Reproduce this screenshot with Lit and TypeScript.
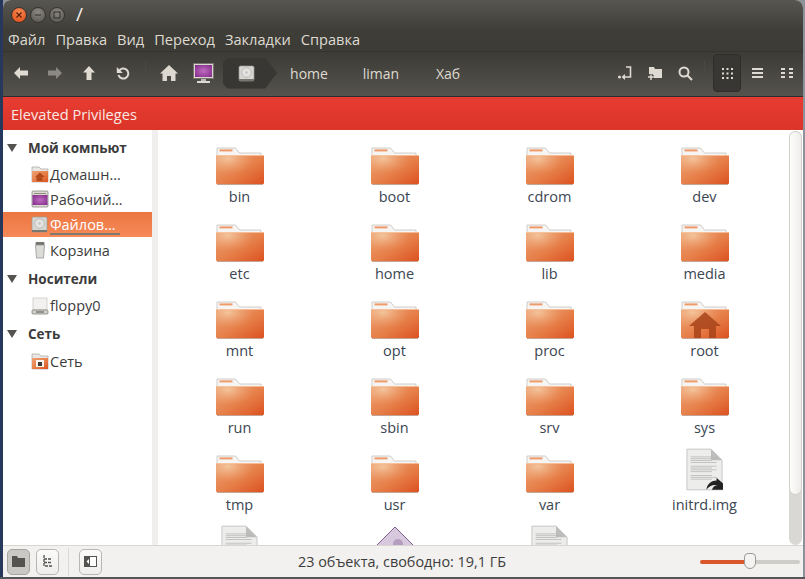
import { LitElement, html, css, svg } from 'lit';
import { customElement } from 'lit/decorators.js';

const MENU = ['Файл', 'Правка', 'Вид', 'Переход', 'Закладки', 'Справка'];

type Item = { name: string; kind?: 'home' | 'file' | 'iso' | 'none' };

const ITEMS: Item[] = [
  { name: 'bin' }, { name: 'boot' }, { name: 'cdrom' }, { name: 'dev' },
  { name: 'etc' }, { name: 'home' }, { name: 'lib' }, { name: 'media' },
  { name: 'mnt' }, { name: 'opt' }, { name: 'proc' }, { name: 'root', kind: 'home' },
  { name: 'run' }, { name: 'sbin' }, { name: 'srv' }, { name: 'sys' },
  { name: 'tmp' }, { name: 'usr' }, { name: 'var' }, { name: 'initrd.img', kind: 'file' },
  { name: '', kind: 'none' }, { name: '', kind: 'iso' }, { name: '', kind: 'none' },
];

const folderBase = svg`
  <path d="M1 1h18.500l4 5H45v12H1z" fill="#f6f5f3" stroke="#c4c2be" stroke-width=".8"/>
  <rect x="3.500" y="2.400" width="13" height="2" fill="#ee9a68"/>
  <rect x="0" y="8" width="48" height="29" rx="1" fill="url(#fb)"/>
  <rect x="0" y="8" width="48" height="29" rx="1" fill="url(#fg)"/>
  <rect x="0" y="8" width="48" height="1" fill="#f7c7a2" opacity=".8"/>
  <rect x="1" y="37" width="46" height="1" fill="#8d4a2a" opacity=".5"/>
`;

function folder(kind?: string) {
  return html`<svg class="folder" width="48" height="40" viewBox="0 0 48 40">
    ${folderBase}
    ${kind === 'home'
      ? svg`<path d="M24 11 8 25h5v12h7v-9h8v9h7V25h5z" fill="#a8431a" opacity=".85"/>`
      : ''}
  </svg>`;
}

function page(arrow = false) {
  const lines = [9, 11, 13, 15, 19, 21, 23, 25, 29, 31, 33];
  return html`<svg class="page" width="37" height="45" viewBox="0 0 40 46">
    <path d="M1 1h26l12 12v32H1z" fill="#ededec" stroke="#c2c2c0"/>
    <path d="M27 1v12h12z" fill="#bdbdbb"/>
    ${lines.map((y) => svg`<rect x="5" y=${y} width="${y % 4 === 1 ? 23 : 28}" height=".8" fill="#b4b4b2"/>`)}
    ${arrow
      ? svg`<path d="M22 45c1-7 6-10 11-10v-3l7 6v7H28c1-3 3-5 6-5-5-1-9 1-12 5z" fill="#222"/>`
      : ''}
  </svg>`;
}

function iso() {
  return html`<svg width="48" height="46" viewBox="0 0 48 46">
    <path d="M24 1 47 24 24 47 1 24z" fill="#d8c8dd" stroke="#7d5e8c"/>
    <circle cx="27" cy="18" r="5" fill="#b49dbe"/>
  </svg>`;
}

const driveIcon = svg`
  <rect x="1" y="1" width="15" height="15" rx="1.500" fill="#d6d6d3" stroke="#9a9a97" stroke-width=".7"/>
  <circle cx="8.500" cy="7.500" r="4.800" fill="#e4e3e1" stroke="#a9a9a6" stroke-width=".7"/>
  <circle cx="8.500" cy="7.500" r="1.300" fill="#c2c2bf"/>
  <rect x="1" y="14" width="15" height="2" fill="#77776f"/>
`;

const sideIcons: Record<string, unknown> = {
  home: svg`<path d="M1 2h7l2 2h7v13H1z" fill="#e9e7e3" stroke="#a9a5a0" stroke-width=".7"/>
    <rect x="1" y="6" width="16" height="11" fill="url(#fb)"/>
    <path d="M9 7.500 4 12h1.500v4h6v-4H14z" fill="#b34a1c"/>`,
  desktop: svg`<rect x="1" y="1" width="16" height="16" rx="1" fill="#dedcd2" stroke="#7b7a72" stroke-width=".7"/>
    <rect x="1.500" y="5" width="15" height="10" fill="url(#screen)"/>
    <rect x="3" y="3" width="12" height="1" fill="#8f8d7a"/>`,
  drive: driveIcon,
  trash: svg`<rect x="4.500" y="1" width="9" height="3" rx="1" fill="#77776f"/>
    <path d="M4.500 4h9l-1 13h-7z" fill="#dcdcd9" stroke="#8a8a87" stroke-width=".7"/>`,
  floppy: svg`<path d="M2 1h14v12H2z" fill="#f2f1ef" stroke="#c4c3bf" stroke-width=".7"/>
    <rect x="1" y="13" width="16" height="4" rx="1" fill="#d2d1cd" stroke="#77766f" stroke-width=".7"/>
    <rect x="5" y="14.500" width="8" height="1" fill="#55544f"/>`,
  network: svg`<path d="M1 2h7l2 2h7v13H1z" fill="#e9e7e3" stroke="#a9a5a0" stroke-width=".7"/>
    <rect x="1" y="6" width="16" height="11" fill="url(#fb)"/>
    <rect x="5" y="8" width="8" height="7" fill="#f7f5f2"/>
    <rect x="7" y="10" width="4" height="4" fill="#3f3a36"/>`,
};

const PLACES = [
  { title: 'Мой компьют', rows: [
    { icon: 'home', label: 'Домашн…' },
    { icon: 'desktop', label: 'Рабочий…' },
    { icon: 'drive', label: 'Файлов…', selected: true },
    { icon: 'trash', label: 'Корзина' },
  ] },
  { title: 'Носители', rows: [{ icon: 'floppy', label: 'floppy0' }] },
  { title: 'Сеть', rows: [{ icon: 'network', label: 'Сеть' }] },
];

@customElement('app-root')
export class AppRoot extends LitElement {
  static styles = css`
    :host {
      display: block;
      width: 805px;
      height: 579px;
      overflow: hidden;
      background:
        linear-gradient(#55565a, #55565a) bottom / 100% 2px no-repeat,
        linear-gradient(90deg, #26385c 0 3px, #8d929a 3px);
      font-family: 'Open Sans', 'Noto Sans', sans-serif;
      font-size: 14px;
      color: #3c3c3c;
    }
    .defs { display: block; width: 0; height: 0; }
    .window {
      margin-left: 3px;
      width: 800px;
      height: 577px;
      display: flex;
      flex-direction: column;
      border-radius: 8px 8px 0 0;
      overflow: hidden;
      background: #f2f1ef;
    }

    /* title and menu */
    .head {
      height: 52px;
      flex: none;
      box-sizing: border-box;
      border-bottom: 1px solid #35342f;
      background: linear-gradient(#575650, #3e3d38 60%, #3c3b36);
    }
    .title {
      height: 29px;
      display: flex;
      align-items: center;
      padding-left: 8px;
      color: #f3f1ec;
    }
    .wbtn {
      width: 16px;
      height: 16px;
      box-sizing: border-box;
      border-radius: 50%;
      margin-right: 3px;
      display: flex;
      align-items: center;
      justify-content: center;
      background: radial-gradient(circle at 50% 30%, #8a8880, #55534d);
      border: 1px solid #35342f;
    }
    .wbtn.close { background: radial-gradient(circle at 50% 30%, #f58a52, #dd4814); }
    .slash { margin-left: 8px; font-size: 19px; line-height: 1; }
    .menu {
      display: flex;
      gap: 10px;
      padding-left: 5px;
      color: #dfdbd2;
      font-size: 14.6px;
      line-height: 20px;
    }

    /* toolbar */
    .toolbar {
      height: 42px;
      flex: none;
      display: flex;
      align-items: center;
      background: linear-gradient(#3c3b36, #55534c);
      border-bottom: 1px solid #2f2e2a;
      color: #dfdbd2;
      padding: 0 0 2px 1px;
    }
    .tool {
      width: 34px;
      height: 38px;
      flex: none;
      display: flex;
      align-items: center;
      justify-content: center;
    }
    .tool svg { display: block; }
    .tool.narrow { width: 30px; }
    .sep {
      width: 1px;
      height: 24px;
      flex: none;
      background: #4a4943;
      margin: 0 6px 0 5px;
    }
    .sep.right { margin: 0 8px 0 4px; }
    .crumb {
      width: 54px;
      height: 31px;
      flex: none;
      margin-left: 3px;
      display: flex;
      align-items: center;
      justify-content: center;
      padding-right: 8px;
      box-sizing: border-box;
      background: #383733;
      clip-path: polygon(8% 0, 78% 0, 100% 50%, 78% 100%, 8% 100%, 0 85%, 0 15%);
    }
    .path { flex: none; text-align: center; font-size: 14px; }
    .path.home { width: 64px; }
    .path.liman { width: 80px; }
    .path.hub { width: 54px; }
    .spacer { flex: 1; }
    .active-view {
      background: #383733;
      border: 1px solid #2f2e2a;
      border-radius: 4px;
      box-sizing: border-box;
      width: 28px;
      margin-right: 1px;
    }
    .view { width: 30px; }
    .toolbar-end { width: 1px; flex: none; }

    .banner {
      height: 33px;
      flex: none;
      box-sizing: border-box;
      display: flex;
      align-items: center;
      padding: 1px 0 0 8px;
      background: linear-gradient(#e73c31, #db3428);
      color: #f7e8e4;
      font-size: 14.6px;
    }

    /* main area */
    .main { flex: 1; min-height: 0; display: flex; background: #fff; }
    .side {
      width: 155px;
      flex: none;
      padding-top: 3.5px;
      box-sizing: border-box;
      background: #fff;
      border-right: 6px solid #f0efed;
    }
    .group {
      height: 28px;
      display: flex;
      align-items: center;
      padding-left: 4px;
      font-weight: 700;
      font-size: 13.5px;
      color: #3c3c3c;
    }
    .tri {
      width: 0;
      height: 0;
      border: 5.5px solid transparent;
      border-top: 8px solid #55534f;
      border-bottom: 0;
      margin-right: 11px;
    }
    .row {
      height: 25.3px;
      display: flex;
      align-items: center;
      padding-left: 28px;
      gap: 1px;
      font-size: 14.5px;
      position: relative;
    }
    .row.sel {
      background: linear-gradient(#ec7642, #f68a58);
      color: #fff;
    }
    .row.sel::after {
      content: '';
      position: absolute;
      left: 47px;
      width: 70px;
      bottom: 2px;
      height: 2px;
      background: #7f7873;
    }
    .places { padding-bottom: 2.2px; }

    .content {
      flex: 1;
      min-width: 0;
      overflow: hidden;
      display: flex;
    }
    .grid {
      flex: 1;
      display: grid;
      grid-template-columns: repeat(4, 155px);
      grid-auto-rows: 77px;
      padding: 16px 0 0 4px;
      align-content: start;
    }
    .cell {
      display: flex;
      flex-direction: column;
      align-items: center;
      font-size: 14.5px;
      line-height: 20px;
    }
    .icon { height: 41px; display: flex; align-items: flex-end; }
    .icon svg { display: block; }
    .icon svg.page { margin-bottom: 3px; }
    .cell span { color: #3b4652; }
    .scroll {
      width: 13px;
      flex: none;
      background: #d9d8d5;
      border-radius: 7px;
      margin: 1px 1px 0 -1px;
      display: flex;
    }
    .thumb {
      flex: none;
      width: 100%;
      height: 364px;
      box-sizing: border-box;
      background: linear-gradient(90deg, #fdfdfc, #eeedeb);
      border: 1px solid #d2d0cc;
      border-radius: 7px;
    }

    /* status bar */
    .status {
      height: 32px;
      flex: none;
      display: flex;
      align-items: center;
      box-sizing: border-box;
      border-top: 1px solid #d8d6d2;
      background: #f2f1ef;
      padding-left: 4px;
    }
    .sbtn {
      width: 23px;
      height: 26px;
      flex: none;
      box-sizing: border-box;
      border: 1px solid #b8b6b2;
      border-radius: 5px;
      background: linear-gradient(#fbfbfa, #eeedeb);
      margin-right: 6px;
      display: flex;
      align-items: center;
      justify-content: center;
    }
    .sbtn.on { background: #c9c8c5; border-color: #a7a5a1; }
    .ssep { width: 1px; height: 28px; flex: none; background: #dcdad6; margin: 0 10px 0 3px; }
    .stext {
      width: 500px;
      flex: none;
      margin-left: 44px;
      text-align: center;
      font-size: 14.4px;
      color: #3c3c3c;
    }
    .slider {
      margin-left: 48px;
      width: 100px;
      height: 4px;
      flex: none;
      border-radius: 2px;
      background: linear-gradient(90deg, #d9572a 50%, #cfcdc9 50%);
      position: relative;
    }
    .knob {
      position: absolute;
      left: 44px;
      top: -7px;
      width: 12px;
      height: 16px;
      box-sizing: border-box;
      background: #f4f3f1;
      border: 1px solid #9b9995;
      border-radius: 4px 4px 6px 6px;
    }
  `;

  render() {
    return html`
      <svg class="defs">
        <defs>
          <linearGradient id="fb" x1="0" y1="0" x2="1" y2="1">
            <stop offset="0" stop-color="#eda273"/>
            <stop offset=".55" stop-color="#e67e48"/>
            <stop offset="1" stop-color="#dc5220"/>
          </linearGradient>
          <radialGradient id="fg" cx=".25" cy=".12" r=".55">
            <stop offset="0" stop-color="#f6d3ae" stop-opacity=".75"/>
            <stop offset="1" stop-color="#f0a878" stop-opacity="0"/>
          </radialGradient>
          <radialGradient id="screen" cx=".5" cy=".5" r=".7">
            <stop offset="0" stop-color="#c06cc0"/>
            <stop offset="1" stop-color="#7f2a88"/>
          </radialGradient>
        </defs>
      </svg>
      <div class="window">
        <div class="head">
          <div class="title">
            <span class="wbtn close">
              <svg width="8" height="8" viewBox="0 0 8 8"><path d="M1.500 1.500l5 5m0-5l-5 5" stroke="#5a1c08" stroke-width="1.200"/></svg>
            </span>
            <span class="wbtn">
              <svg width="8" height="8" viewBox="0 0 8 8"><path d="M1 4h6" stroke="#2f2e2a" stroke-width="1.200"/></svg>
            </span>
            <span class="wbtn">
              <svg width="8" height="8" viewBox="0 0 8 8"><rect x="1" y="1" width="6" height="6" fill="none" stroke="#2f2e2a"/></svg>
            </span>
            <span class="slash">/</span>
          </div>
          <div class="menu">${MENU.map((m) => html`<span>${m}</span>`)}</div>
        </div>

        <div class="toolbar">
          <span class="tool"><svg width="14" height="12" viewBox="0 0 14 12"><path d="M0 6l6-6v3.500h8v5H6V12z" fill="#dfdbd2"/></svg></span>
          <span class="tool"><svg width="14" height="12" viewBox="0 0 14 12"><path d="M14 6L8 0v3.500H0v5h8V12z" fill="#8b8981"/></svg></span>
          <span class="tool"><svg width="12" height="14" viewBox="0 0 12 14"><path d="M6 0l6 6.500H8.500V14h-5V6.500H0z" fill="#dfdbd2"/></svg></span>
          <span class="tool"><svg width="14" height="14" viewBox="0 0 14 14"><path d="M3 5a5 5 0 1 1-.5 4" fill="none" stroke="#dfdbd2" stroke-width="2"/><path d="M.8 1v6h6z" fill="#dfdbd2"/></svg></span>
          <span class="sep"></span>
          <span class="tool"><svg width="18" height="16" viewBox="0 0 18 16"><path d="M9 0 0 8.500h2.500V16h4.500v-5h4v5h4.500V8.500H18z" fill="#dcd8cf"/></svg></span>
          <span class="tool"><svg width="21" height="21" viewBox="0 0 21 21"><rect x=".5" y=".5" width="20" height="15" fill="#d9d7d0" stroke="#77756e"/><rect x="2" y="2" width="17" height="12" fill="url(#screen)"/><rect x="8" y="16" width="5" height="2" fill="#bdbbb4"/><rect x="4" y="18" width="13" height="2" fill="#dcdad3"/></svg></span>
          <span class="crumb"><svg width="17" height="17" viewBox="0 0 17 17">${driveIcon}</svg></span>
          <span class="path home">home</span>
          <span class="path liman">liman</span>
          <span class="path hub">Хаб</span>
          <span class="spacer"></span>
          <span class="tool narrow"><svg width="14" height="14" viewBox="0 0 14 14"><circle cx="1.500" cy="11" r="1.500" fill="#dfdbd2"/><path d="M8 1h4.500v10H6" fill="none" stroke="#dfdbd2" stroke-width="1.600"/><path d="M7 8v6l-3.500-3z" fill="#dfdbd2"/></svg></span>
          <span class="tool narrow"><svg width="15" height="13" viewBox="0 0 15 13"><path d="M1 0h5l1 2h7v9H1z" fill="#dfdbd2"/><path d="M0 10h6M3 7v6" stroke="#45443f" stroke-width="3.500"/><path d="M0 10h6M3 7.500v5.500" stroke="#dfdbd2" stroke-width="1.500"/></svg></span>
          <span class="tool narrow"><svg width="15" height="15" viewBox="0 0 15 15"><circle cx="6" cy="6" r="4.500" fill="none" stroke="#dfdbd2" stroke-width="2"/><path d="M9.500 9.500 14 14" stroke="#dfdbd2" stroke-width="2"/></svg></span>
          <span class="sep right"></span>
          <span class="tool active-view"><svg width="11" height="11" viewBox="0 0 11 11"><path d="M0 0h2v2H0zM4.500 0h2v2h-2zM9 0h2v2H9zM0 4.500h2v2H0zM4.500 4.500h2v2h-2zM9 4.500h2v2H9zM0 9h2v2H0zM4.500 9h2v2h-2zM9 9h2v2H9z" fill="#dfdbd2"/></svg></span>
          <span class="tool view"><svg width="11" height="10" viewBox="0 0 11 10"><path d="M0 0h11v2H0zM0 4h11v2H0zM0 8h11v2H0z" fill="#dfdbd2"/></svg></span>
          <span class="tool view"><svg width="12" height="10" viewBox="0 0 12 10"><path d="M0 0h4v2H0zM8 0h4v2H8zM0 4h4v2H0zM8 4h4v2H8zM0 8h4v2H0zM8 8h4v2H8z" fill="#dfdbd2"/></svg></span>
          <span class="toolbar-end"></span>
        </div>

        <div class="banner">Elevated Privileges</div>

        <div class="main">
          <div class="side">
            ${PLACES.map((g) => html`
              <div class="places">
                <div class="group"><span class="tri"></span>${g.title}</div>
                ${g.rows.map((r) => html`
                  <div class="row ${(r as { selected?: boolean }).selected ? 'sel' : ''}">
                    <svg width="18" height="18" viewBox="0 0 18 18">${sideIcons[r.icon]}</svg>
                    <span>${r.label}</span>
                  </div>
                `)}
              </div>
            `)}
          </div>
          <div class="content">
            <div class="grid">
              ${ITEMS.map((it) => html`
                <div class="cell">
                  <div class="icon">
                    ${it.kind === 'file' ? page(true)
                      : it.kind === 'none' ? page()
                      : it.kind === 'iso' ? iso()
                      : folder(it.kind)}
                  </div>
                  <span>${it.name}</span>
                </div>
              `)}
            </div>
            <div class="scroll"><div class="thumb"></div></div>
          </div>
        </div>

        <div class="status">
          <span class="sbtn on"><svg width="13" height="11" viewBox="0 0 13 11"><path d="M0 0h5l1 2h7v9H0z" fill="#55534f"/></svg></span>
          <span class="sbtn"><svg width="11" height="13" viewBox="0 0 11 13"><path d="M2 0v11h8M2 4h8M2 7.500h8" fill="none" stroke="#55534f" stroke-width="1.300" stroke-dasharray="3 1"/></svg></span>
          <span class="ssep"></span>
          <span class="sbtn"><svg width="13" height="11" viewBox="0 0 13 11"><rect x=".5" y=".5" width="12" height="10" fill="#fff" stroke="#55534f"/><path d="M1 1h5v9H1z" fill="#55534f"/><path d="M5 3v5L2.500 5.500z" fill="#fff"/></svg></span>
          <span class="stext">23 объекта, свободно: 19,1 ГБ</span>
          <span class="slider"><span class="knob"></span></span>
        </div>
      </div>
    `;
  }
}
